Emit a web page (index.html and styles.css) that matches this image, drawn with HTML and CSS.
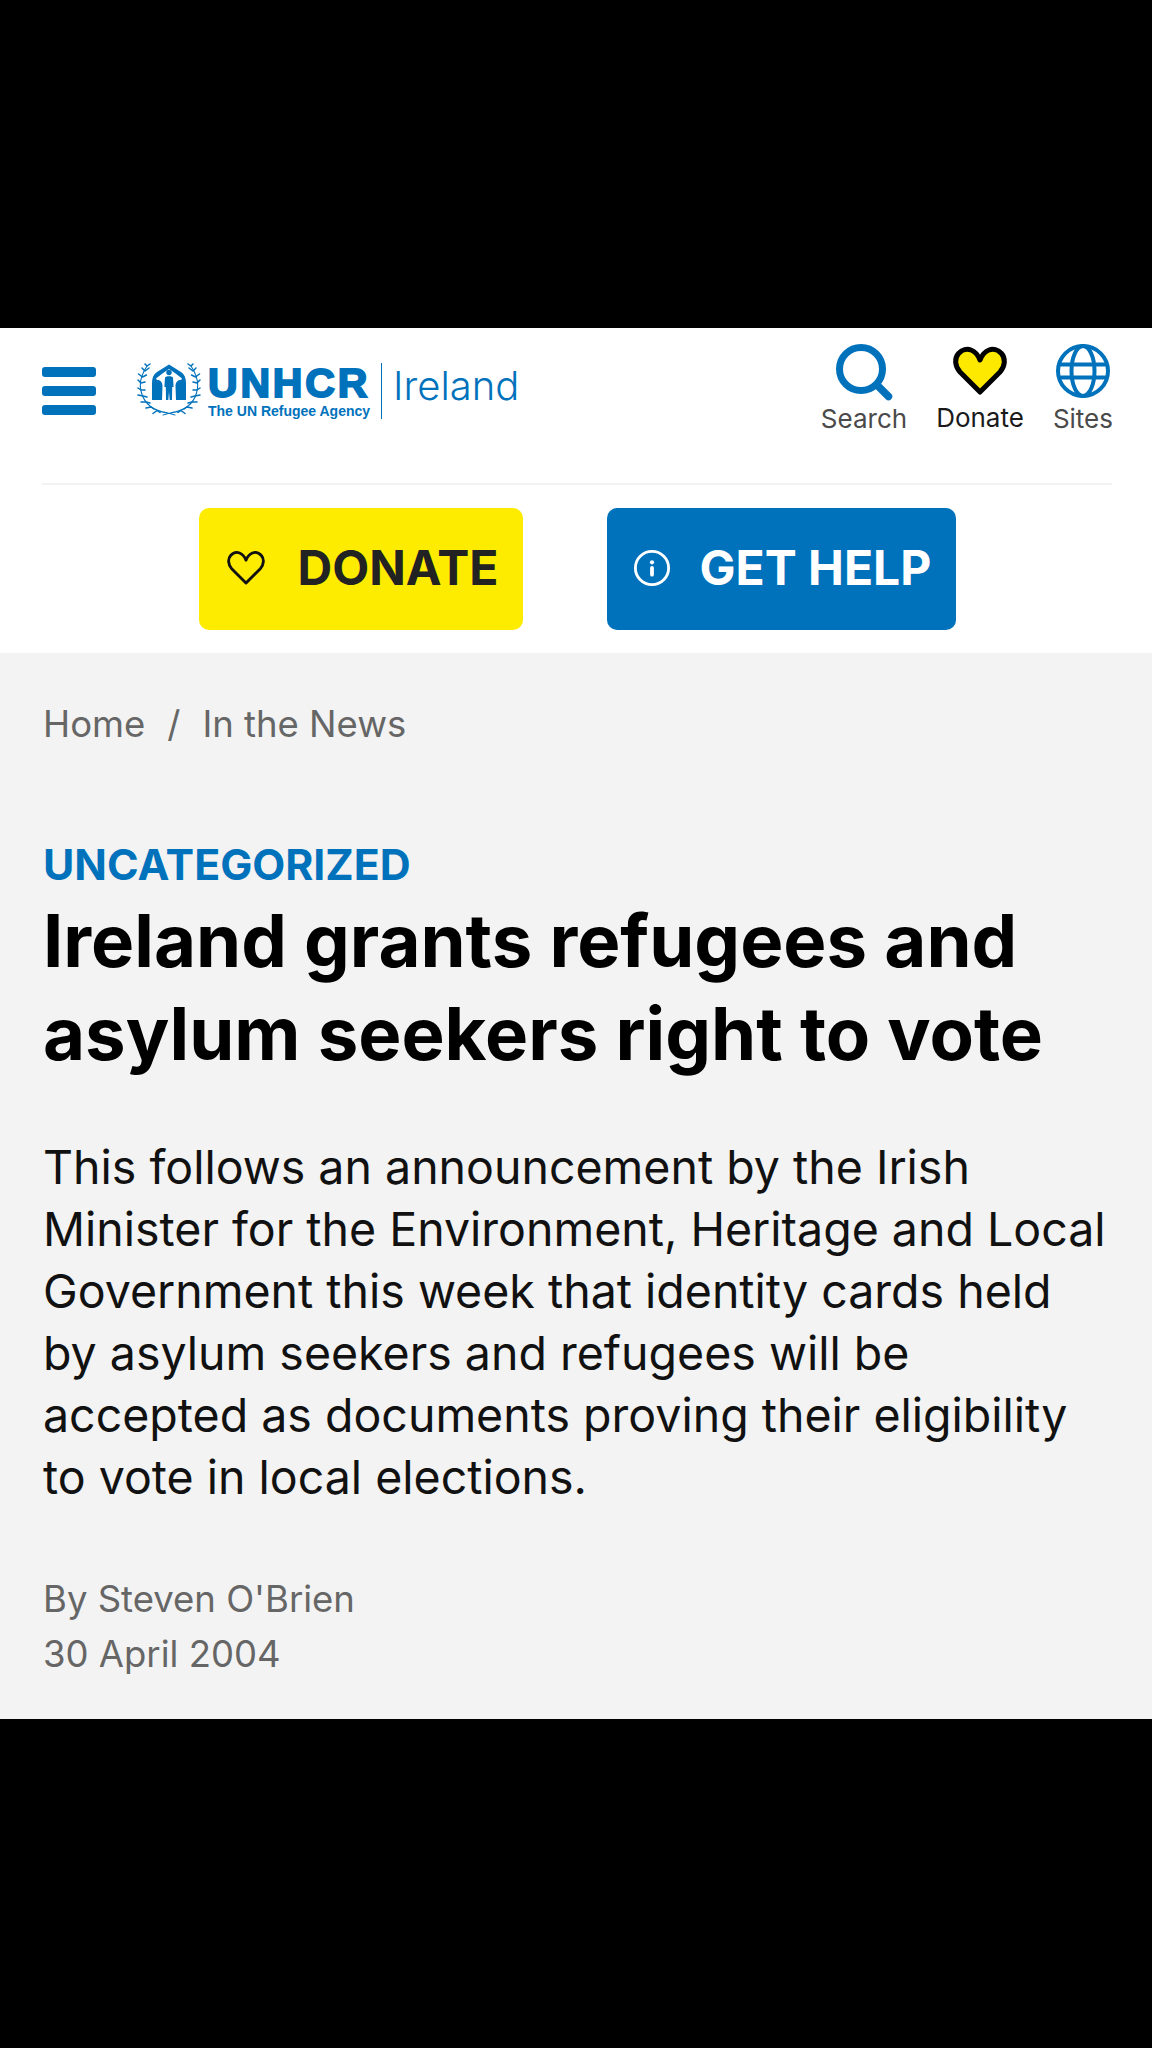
FILE: index.html
```html
<!DOCTYPE html>
<html lang="en">
<head>
<meta charset="utf-8">
<title>Ireland grants refugees and asylum seekers right to vote</title>
<link rel="stylesheet" href="styles.css">
</head>
<body>
<div class="band-top"></div>
<header class="site">
  <div class="masthead">
    <div class="brand">
      <div class="burger"><span></span><span></span><span></span></div>
      <svg class="emblem" viewBox="0 0 64 54">
        <g id="half">
          <path fill="#0072bc" d="M32 1.5 L20 9 C16.5 11.5 15 15 15 20 L15 37 L25 37 L25.5 23 C25.5 19 23 16.5 20 17 L19 15.5 C22 13 27 9 32 6 Z"/>
          <g fill="none" stroke="#0072bc" stroke-width="1.5" stroke-linecap="round">
            <path d="M30 50 C18 48 8 42 4.5 30 C2 22 4 12 10 3" stroke-width="1.1"/>
            <path d="M10 3 l3 -2 M10 3 l-2 -2 M8 8 l4 -3 M8 8 l-3 -3 M5.5 14 l4 -2 M5.5 14 l-4 -3 M4 20 l4 -1 M4 20 l-3 -3 M4 27 l4 0 M4 27 l-3 -2 M6 33 l4 1 M6 33 l-5 -1 M9 39 l4 1 M9 39 l-5 0 M14 44 l3 2 M14 44 l-5 1 M20 47.5 l3 2 M20 47.5 l-4 3"/>
            <path d="M26 52 l11 -3" stroke-width="1"/>
          </g>
        </g>
        <use href="#half" transform="matrix(-1 0 0 1 64 0)"/>
        <circle cx="32" cy="9.5" r="2.7" fill="#0072bc"/>
        <path d="M28 14.5 C29.5 12.7 34.5 12.7 36 14.5 L36.6 24 L35.2 24 L35 37 L32.7 37 L32 29 L31.3 37 L29 37 L28.8 24 L27.4 24 Z" fill="#0072bc"/>
      </svg>
      <div class="wordmark">
        <span class="wm-main">UNHCR</span>
        <span class="wm-sub">The UN Refugee Agency</span>
      </div>
      <span class="wm-rule"></span>
      <span class="wm-country">Ireland</span>
    </div>
    <nav class="tools">
      <a class="tool">
        <svg class="tool-icon" viewBox="0 0 58 58"><circle cx="26" cy="26" r="21.5" fill="none" stroke="#0072bc" stroke-width="7"/><path d="M42 42 L53.5 53.5" stroke="#0072bc" stroke-width="7.5" stroke-linecap="round"/></svg>
        <span class="tool-label">Search</span>
      </a>
      <a class="tool">
        <svg class="tool-icon" viewBox="0 0 58 58"><path d="M29 49 L9 29 C3.5 23 3.5 15 7.5 10.5 C11 6.5 16 5.5 20 7 C24 8.5 27 12 29 17 C31 12 34 8.5 38 7 C42 5.5 47 6.5 50.5 10.5 C54.5 15 54.5 23 49 29 Z" fill="#fde900" stroke="#000" stroke-width="5" stroke-linejoin="round"/></svg>
        <span class="tool-label tool-label-dark">Donate</span>
      </a>
      <a class="tool">
        <svg class="tool-icon" viewBox="0 0 58 58" fill="none" stroke="#0072bc" stroke-width="4"><circle cx="29" cy="28" r="25"/><ellipse cx="29" cy="28" rx="11.5" ry="25"/><path d="M6 21.5 H52 M6 34.5 H52"/></svg>
        <span class="tool-label">Sites</span>
      </a>
    </nav>
  </div>
  <div class="cta">
    <a class="btn btn-donate">
      <svg class="btn-icon" viewBox="1 3 56 50"><path d="M29 49 L9 29 C3.5 23 3.5 15 7.5 10.5 C11 6.5 16 5.5 20 7 C24 8.5 27 12 29 17 C31 12 34 8.5 38 7 C42 5.5 47 6.5 50.5 10.5 C54.5 15 54.5 23 49 29 Z" fill="none" stroke="#111" stroke-width="4" stroke-linejoin="round"/></svg>
      <span>DONATE</span>
    </a>
    <a class="btn btn-help">
      <svg class="btn-icon" viewBox="0 0 40 40" fill="none" stroke="#fff"><circle cx="20" cy="20" r="17.5" stroke-width="3"/><circle cx="20" cy="14" r="2.2" fill="#fff" stroke="none"/><path d="M20 20 V27" stroke-width="4" stroke-linecap="round"/></svg>
      <span>GET HELP</span>
    </a>
  </div>
</header>
<main class="article">
  <nav class="crumbs"><span>Home</span><span class="sep">/</span><span>In the News</span></nav>
  <p class="kicker">UNCATEGORIZED</p>
  <h1 class="title">Ireland grants refugees and asylum seekers right to vote</h1>
  <p class="lede">This follows an announcement by the Irish Minister for the Environment, Heritage and Local Government this week that identity cards held by asylum seekers and refugees will be accepted as documents proving their eligibility to vote in local elections.</p>
  <p class="meta">By Steven O'Brien</p>
  <p class="meta">30 April 2004</p>
</main>
<div class="band-bottom"></div>
</body>
</html>
```
FILE: styles.css
```css
* { box-sizing: border-box; }
html, body { margin: 0; padding: 0; background: #000; }
body { font-family: "Inter", "Liberation Sans", sans-serif; color: #000; }
p, h1 { margin: 0; }
.band-top { height: 328px; background: #000; }
.band-bottom { height: 329px; background: #000; }

.site { background: #fff; padding: 0 40px 0 42px; height: 325px; }
.masthead { height: 157px; display: flex; justify-content: space-between; border-bottom: 2px solid #f2f2f2; }
.brand { display: flex; align-items: flex-start; padding-top: 35px; }
.burger { width: 54px; display: flex; flex-direction: column; gap: 9px; padding-top: 4px; margin-right: 41px; }
.burger span { height: 10px; border-radius: 3px; background: #0072bc; }
.emblem { width: 64px; height: 54px; flex: none; margin-right: 7px; }
.wordmark { display: flex; flex-direction: column; width: 160px; color: #0072bc; font-family: "Liberation Sans", sans-serif; font-weight: 700; }
.wm-main { font-size: 41px; line-height: 40px; letter-spacing: 2.8px; -webkit-text-stroke: 2px #0072bc; white-space: nowrap; }
.wm-sub { font-size: 14px; line-height: 15px; margin-top: 1px; white-space: nowrap; }
.wm-rule { width: 1px; height: 56px; background: #0072bc; margin: 0 11px 0 13px; }
.wm-country { font-size: 40px; line-height: 42px; margin-top: 2px; font-weight: 300; color: #0072bc; }

.tools { display: flex; gap: 29px; padding-top: 15px; margin-right: -1px; }
.tool { display: flex; flex-direction: column; align-items: center; }
.tool-icon { width: 58px; height: 58px; }
.tool-label { font-size: 26px; line-height: 32px; color: #4a4a4a; margin-top: 2px; }
.tool-label-dark { color: #1a1a1a; margin-top: 1px; }

.cta { display: flex; justify-content: center; gap: 84px; padding-top: 23px; }
.btn { height: 122px; border-radius: 10px; display: flex; align-items: center; font-size: 48px; font-weight: 700; gap: 28px; padding-bottom: 3px; }
.btn-donate { width: 324px; background: #fdec00; color: #222; padding-left: 27px; gap: 32px; }
.btn-help { width: 349px; background: #0072bc; color: #fff; padding-left: 25px; }
.btn-icon { width: 40px; height: 38px; flex: none; }

.article { background: #f3f3f3; height: 1066px; padding: 47px 40px 0 43px; }
.crumbs { display: flex; gap: 22px; font-size: 36.5px; line-height: 48px; color: #666; }
.kicker { margin-top: 92px; font-size: 42.8px; line-height: 50px; font-weight: 700; color: #0072bc; }
.title { margin-top: 5px; font-size: 72.5px; line-height: 92.5px; font-weight: 700; color: #000; }
.lede { margin-top: 56px; font-size: 46.5px; line-height: 62px; color: #111; }
.lede + .meta { margin-top: 64px; }
.meta { font-size: 36.5px; line-height: 55px; color: #666; }
```
